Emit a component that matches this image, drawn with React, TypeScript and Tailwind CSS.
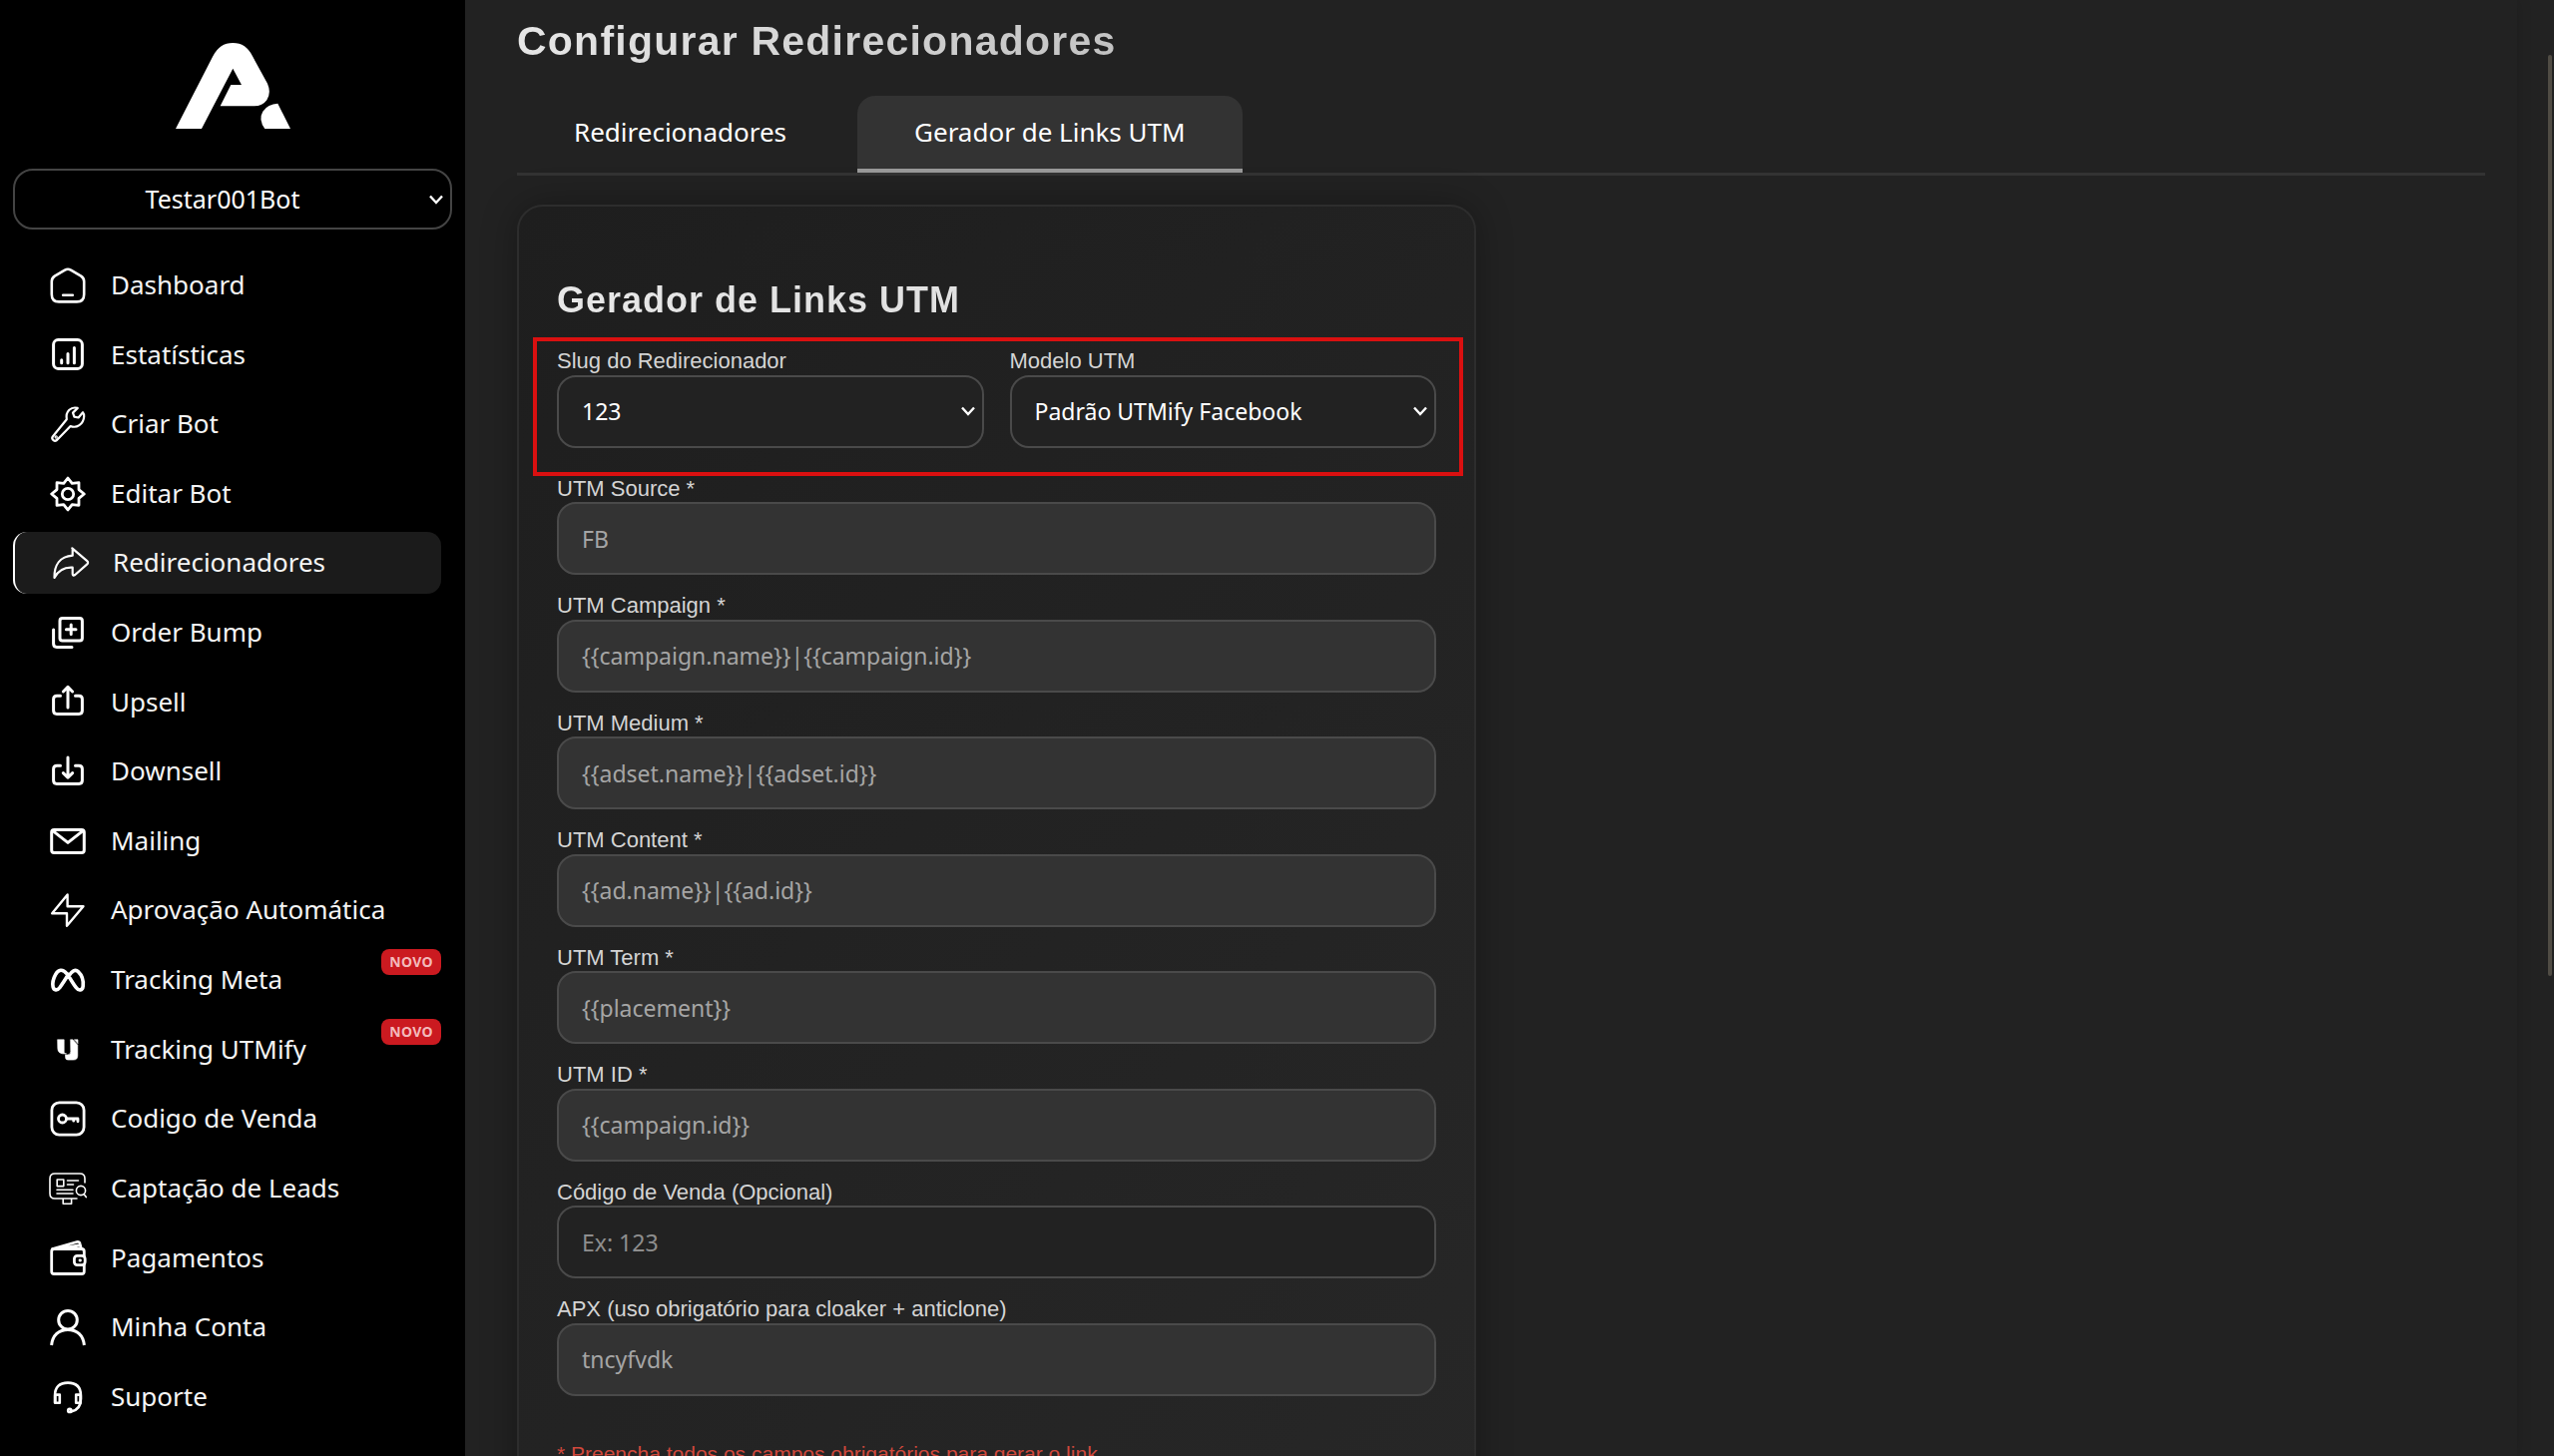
import { useState, type ReactNode } from "react"

function Icon({ children, width = 2 }: { children: ReactNode; width?: number }) {
  return (
    <svg
      viewBox="0 0 40 40"
      className="size-10 shrink-0"
      fill="none"
      stroke="currentColor"
      strokeWidth={width}
      strokeLinecap="round"
      strokeLinejoin="round"
      aria-hidden="true"
    >
      {children}
    </svg>
  )
}

const ICONS: Record<string, ReactNode> = {
  home: (
    <Icon width={2.6}>
      <path d="M17 4.6 6.8 10.6Q3.8 12.6 3.8 16v13Q3.8 36.4 11 36.4h18Q36.2 36.4 36.2 29V16q0-3.4-3-5.4L23 4.6Q20 3 17 4.6z" />
      <path d="M15.2 29.8h9.6" />
    </Icon>
  ),
  stats: (
    <Icon width={3}>
      <rect x="5.6" y="5.6" width="28.8" height="28.8" rx="4.6" />
      <path d="M13.7 25.7v3M20 19.6v9.1M26.4 13.5v15.2" />
    </Icon>
  ),
  wrench: (
    <Icon width={2.2}>
      <path d="M5 32.2c-2 2.4.9 6 4 3.8L22.6 22c6 2.4 13-1.6 13.6-9.6q0-3-1.200-4.200l-4.400 5.300-4.200-.9-1.400-4 4.800-4.700c-6.400-1.800-12.400 3.100-11 11.300z" />
      <circle cx="8.2" cy="33" r=".6" />
    </Icon>
  ),
  gear: (
    <Icon width={2.8}>
      <path d="M20 4 24.2 9.3 31 8.7 31 15.6 36.3 20 31 24.4 31 31.3 24.2 30.7 20 36 15.8 30.7 9 31.3 9 24.4 3.7 20 9 15.6 9 8.7 15.8 9.3z" />
      <circle cx="20" cy="20" r="5.7" />
    </Icon>
  ),
  share: (
    <Icon width={2.2}>
      <path d="M22.3 5.3 37 17.8q2.2 1.9 0 3.8L25.2 32q-2.3 1.6-2.5-.8v-6.5c-8-.5-14 2.4-18.2 10.2C4.2 22.5 10 13.7 22.7 12.7V6.2" />
    </Icon>
  ),
  plus: (
    <Icon width={3}>
      <rect x="12" y="5.6" width="22.4" height="22.4" rx="2.6" />
      <path d="M23.2 12v9.6M18.4 16.8H28M5.6 17v14q0 3.4 3.4 3.4h15" />
    </Icon>
  ),
  upload: (
    <Icon width={3}>
      <path d="M20 26V6M15.4 10 20 5.4l4.6 4.6M12.5 14.2H9q-3.4 0-3.4 3.4V29q0 3.4 3.4 3.4h22q3.4 0 3.4-3.4V17.6q0-3.4-3.4-3.4h-3.5" />
    </Icon>
  ),
  download: (
    <Icon width={3}>
      <path d="M20 6v20M15.4 21.6 20 26.2l4.6-4.6M12.5 14.2H9q-3.4 0-3.4 3.4V29q0 3.4 3.4 3.4h22q3.4 0 3.4-3.4V17.6q0-3.4-3.4-3.4h-3.5" />
    </Icon>
  ),
  mail: (
    <Icon width={3}>
      <rect x="3.7" y="8.5" width="32.6" height="23" rx="2.6" />
      <path d="M5 9.6 20 21.4 35 9.6" />
    </Icon>
  ),
  bolt: (
    <Icon width={2.4}>
      <path d="M19.6 4.4 4.2 23.3H19v12.5l16.5-19.6H19.6z" />
    </Icon>
  ),
  meta: (
    <Icon width={3.6}>
      <path d="M20.6 16.3C24 10.8 27.5 9 30.3 11.6c4 3.8 5.4 10 4.9 14.6-.5 4.4-4.3 4.9-6.9 1.5-3.3-4.3-6.2-10-9.5-14.1-4-4.9-8.4-4.2-11.2 1-2.4 4.3-3.2 8.7-2.5 12.3.8 3.8 4.5 3.8 6.7.8 3.2-4.3 5.5-8 8.8-13.4" />
    </Icon>
  ),
  utmify: (
    <Icon width={0.6}>
      <path
        d="M9.8 9.8h6.4v12.4q0 1.6 1.6 1.6h.6V24q-8.6.6-8.6-5zM22.8 9.8h2l5 5.4v10.6q0 4.3-4.3 4.3h-5.4q-2.6 0-2.6-2.8v-2.4h2.4q2.9 0 2.9-2.9z"
        fill="currentColor"
      />
      <path d="M26.6 9.8H30v3.6z" fill="currentColor" />
    </Icon>
  ),
  key: (
    <Icon width={2.8}>
      <rect x="3.9" y="3.9" width="32.2" height="32.2" rx="7.5" />
      <circle cx="14.5" cy="20" r="4" />
      <path d="M18.5 20H30v2.8M25.7 20v2.2" />
    </Icon>
  ),
  leads: (
    <Icon width={1.6}>
      <path d="M37 14v-4q0-5-5-5H7Q2 5 2 10v15q0 5 5 5h22M15.2 30v5.3h8.4V30" />
      <path d="M9.2 11h6.6v6.6H9.2zM19.5 12h11M19.5 16h6M9 21.3h16M9 25h16" />
      <circle cx="33" cy="22" r="4.6" />
      <path d="m36 25.6 2.3 3" />
    </Icon>
  ),
  wallet: (
    <Icon width={2.8}>
      <rect x="3.7" y="11.5" width="32.6" height="25" rx="2.6" />
      <path d="M4.5 11.5 29 4.5q2.6-.6 3.1 1.8L33.4 11.5M17 10.500l14-2.500" />
      <rect x="26.4" y="18.4" width="10.8" height="9.2" rx="3" fill="black" />
      <path d="M32 23h.5" />
    </Icon>
  ),
  user: (
    <Icon width={3}>
      <circle cx="20" cy="12.7" r="9.3" />
      <path d="M3.6 38C4.6 28 11 22.4 20 22.4s15.4 5.6 16.4 15.6" strokeLinecap="butt" />
    </Icon>
  ),
  support: (
    <Icon width={2.6}>
      <path d="M7 25.5V18.7Q7 5.6 20 5.6t13 13.1v3q0 10.8-9.6 12.7" />
      <path d="M11.8 17.6H7.4v8.2h4.4zM28.2 17.6h4.4v8.2h-4.4z" />
      <circle cx="21.8" cy="33.4" r="1.6" />
    </Icon>
  ),
}

const NAV = [
  { icon: "home", label: "Dashboard" },
  { icon: "stats", label: "Estatísticas" },
  { icon: "wrench", label: "Criar Bot" },
  { icon: "gear", label: "Editar Bot" },
  { icon: "share", label: "Redirecionadores", active: true },
  { icon: "plus", label: "Order Bump" },
  { icon: "upload", label: "Upsell" },
  { icon: "download", label: "Downsell" },
  { icon: "mail", label: "Mailing" },
  { icon: "bolt", label: "Aprovação Automática" },
  { icon: "meta", label: "Tracking Meta", isNew: true },
  { icon: "utmify", label: "Tracking UTMify", isNew: true },
  { icon: "key", label: "Codigo de Venda" },
  { icon: "leads", label: "Captação de Leads" },
  { icon: "wallet", label: "Pagamentos" },
  { icon: "user", label: "Minha Conta" },
  { icon: "support", label: "Suporte" },
]

const FIELDS = [
  { id: "utm-source", label: "UTM Source *", value: "FB" },
  { id: "utm-campaign", label: "UTM Campaign *", value: "{{campaign.name}}|{{campaign.id}}" },
  { id: "utm-medium", label: "UTM Medium *", value: "{{adset.name}}|{{adset.id}}" },
  { id: "utm-content", label: "UTM Content *", value: "{{ad.name}}|{{ad.id}}" },
  { id: "utm-term", label: "UTM Term *", value: "{{placement}}" },
  { id: "utm-id", label: "UTM ID *", value: "{{campaign.id}}" },
  { id: "sale-code", label: "Código de Venda (Opcional)", placeholder: "Ex: 123" },
  { id: "apx", label: "APX (uso obrigatório para cloaker + anticlone)", value: "tncyfvdk" },
]

function Chevron() {
  return (
    <svg
      viewBox="0 0 14 10"
      className="pointer-events-none absolute right-[9px] top-1/2 h-[10px] w-[14px] -translate-y-1/2"
      fill="none"
      stroke="white"
      strokeWidth="2.4"
      aria-hidden="true"
    >
      <path d="m1 1.5 6 6.5 6-6.5" />
    </svg>
  )
}

function Logo() {
  return (
    <svg viewBox="528 128 345 258" className="h-[86px] w-[115px]" fill="white" role="img" aria-label="Logo">
      <path d="M528 386 640 168Q660 128 700 128T759 168L804 250Q816 278 802 300 789 318 764 318H662L694 254H726L700 205 606 386z" />
      <path d="M835 310 873 386H796Q776 358 790 334 805 311 835 310z" />
    </svg>
  )
}

function Sidebar() {
  return (
    <aside className="w-[466px] shrink-0 overflow-hidden bg-black px-[13px] pt-[43px] text-white">
      <div className="flex justify-center">
        <Logo />
      </div>
      <div className="relative mt-10">
        <select
          aria-label="Bot"
          className="h-[61px] w-full appearance-none rounded-[20px] border-2 border-[#444] bg-black pr-5 text-center text-[25px] text-white"
        >
          <option>Testar001Bot</option>
        </select>
        <Chevron />
      </div>
      <nav className="mr-[11px] mt-[25px] flex flex-col gap-2">
        {NAV.map((item) => (
          <a
            key={item.label}
            href="#"
            className={`relative flex items-center gap-[23px] rounded-[14px] py-[13px] pl-[35px] text-[26px] leading-[1.37] text-[#f5f5f5] ${
              item.active ? "border-l-2 border-white bg-[#1b1b1b]" : ""
            }`}
          >
            <span className="-my-1 text-white">{ICONS[item.icon]}</span>
            {item.label}
            {item.isNew && (
              <span className="absolute right-0 top-0 rounded-lg bg-[#cb1a20] px-2 text-[14px] font-bold leading-[26px] tracking-wide text-[#f3b9ba]">
                NOVO
              </span>
            )}
          </a>
        ))}
      </nav>
    </aside>
  )
}

function SelectField({ id, label, option }: { id: string; label: string; option: string }) {
  return (
    <div>
      <label htmlFor={id} className="block font-['Liberation_Sans',sans-serif] text-[22px] leading-tight text-[#d4d4d4]">
        {label}
      </label>
      <div className="relative">
        <select
          id={id}
          className="h-[73px] w-full appearance-none rounded-[19px] border-2 border-[#4a4a4a] bg-[#222] px-[23px] text-[23px] text-white"
        >
          <option>{option}</option>
        </select>
        <Chevron />
      </div>
    </div>
  )
}

function UtmForm() {
  return (
    <form className="relative mt-[29px] w-[961px] rounded-[26px] border-2 border-[#2d2d2d] bg-linear-135 from-[#1e1e1e] to-[#272727] px-[38px] pb-16 pt-[73px] shadow-[0_0_36px_rgba(0,0,0,0.3)]">
      <h2 className="bg-linear-135 from-[#e8e8e8] to-[#d8d8d8] bg-clip-text font-['Liberation_Sans',sans-serif] text-[36px] font-bold leading-[42px] tracking-[1px] text-transparent">
        Gerador de Links UTM
      </h2>
      <div className="mb-[27px] mt-[26px] grid grid-cols-2 gap-[26px]">
        <SelectField id="slug" label="Slug do Redirecionador" option="123" />
        <SelectField id="model" label="Modelo UTM" option="Padrão UTMify Facebook" />
      </div>
      <div className="pointer-events-none absolute left-[14px] right-[11px] top-[131px] h-[139px] border-4 border-[#da1010]" />
      <div className="flex flex-col gap-[17px]">
        {FIELDS.map((field) => (
          <div key={field.id}>
            <label
              htmlFor={field.id}
              className="block font-['Liberation_Sans',sans-serif] text-[22px] leading-tight text-[#d4d4d4]"
            >
              {field.label}
            </label>
            <input
              id={field.id}
              type="text"
              defaultValue={field.value}
              placeholder={field.placeholder}
              readOnly={field.value !== undefined}
              className="block h-[73px] w-full rounded-[19px] border-2 border-[#4a4a4a] bg-[#222] px-[23px] text-[23px] text-[#a5a5a5] placeholder:text-[#8e8e8e] read-only:bg-[#333]"
            />
          </div>
        ))}
      </div>
      <p className="mt-[45px] font-['Liberation_Sans',sans-serif] text-[21px] leading-[25px] text-[#d0483c]">
        * Preencha todos os campos obrigatórios para gerar o link
      </p>
    </form>
  )
}

export default function App() {
  const [tab, setTab] = useState("Gerador de Links UTM")

  return (
    <div className="relative flex h-screen overflow-hidden bg-[#222] font-['Noto_Sans',sans-serif]">
      <Sidebar />
      <main className="mr-[37px] min-w-0 flex-1 overflow-hidden pl-[52px] pr-8 pt-4 shadow-[0_0_14px_rgba(0,0,0,0.15)]">
        <h1 className="w-fit bg-linear-135 from-[#e8e8e8] to-[#c2c2c2] bg-clip-text font-['Liberation_Sans',sans-serif] text-[41px] font-bold leading-[50px] tracking-[0.03em] text-transparent">
          Configurar Redirecionadores
        </h1>
        <div className="mt-[30px] flex gap-[14px] border-b-3 border-[#333]">
          {["Redirecionadores", "Gerador de Links UTM"].map((name) => (
            <button
              key={name}
              type="button"
              onClick={() => setTab(name)}
              className={`h-[77px] rounded-t-[18px] border-b-4 px-[57px] text-[26px] text-white ${
                tab === name ? "border-[#999] bg-[#333]" : "border-transparent"
              }`}
            >
              {name}
            </button>
          ))}
        </div>
        <UtmForm />
      </main>
      <div className="absolute right-[2px] top-[55px] h-[923px] w-1 rounded-full bg-[#504c44]" />
    </div>
  )
}
